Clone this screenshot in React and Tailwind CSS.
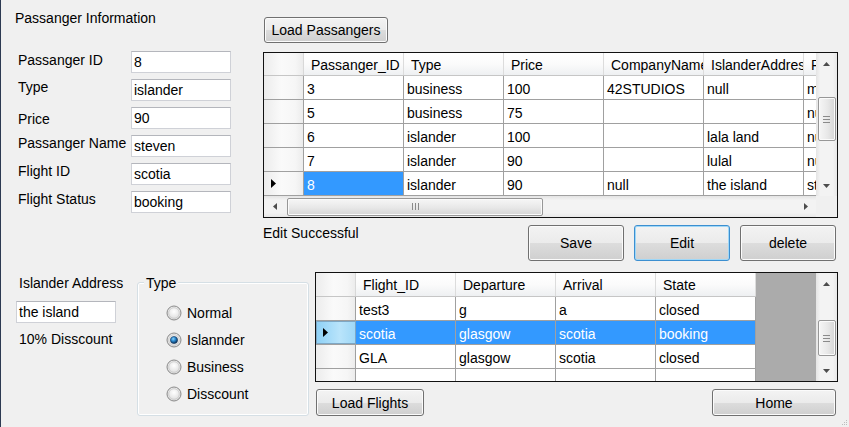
import React from 'react';

const Tri = ({ dir, color = '#4d4d4d' }) => {
  if (dir === 'up') return <svg width="7" height="4"><polygon points="0,4 3.5,0 7,4" fill={color} /></svg>;
  if (dir === 'down') return <svg width="7" height="4"><polygon points="0,0 3.5,4 7,0" fill={color} /></svg>;
  if (dir === 'left') return <svg width="4" height="7"><polygon points="4,0 0,3.5 4,7" fill={color} /></svg>;
  return <svg width="4" height="7"><polygon points="0,0 4,3.5 0,7" fill={color} /></svg>;
};

const RowArrow = () => (
  <svg width="5" height="9"><polygon points="0,0 5,4.5 0,9" fill="#000" /></svg>
);

const VScroll = ({ thumb }) => (
  <div className="flex w-[21px] shrink-0 flex-col bg-[linear-gradient(to_right,#e4e4e4,#f3f3f3_20%,#f3f3f3_80%,#e8e8e8)]">
    <div className="flex h-[21px] items-center justify-center"><Tri dir="up" /></div>
    <div className="flex-1">
      <div className={`mx-auto flex w-[18px] items-center justify-center rounded-[2px] border border-[#979797] bg-[linear-gradient(to_right,#f6f6f6,#e9e9e9_50%,#d6d6d6)] shadow-[inset_0_0_0_1px_#fbfbfb] ${thumb}`}>
        <div className="flex flex-col gap-[2px]">
          <div className="h-px w-[7px] bg-[#8a8a8a]" />
          <div className="h-px w-[7px] bg-[#8a8a8a]" />
          <div className="h-px w-[7px] bg-[#8a8a8a]" />
        </div>
      </div>
    </div>
    <div className="flex h-[21px] items-center justify-center"><Tri dir="down" /></div>
  </div>
);

const HScroll = () => (
  <div className="flex h-full flex-1 items-center bg-[linear-gradient(to_bottom,#e4e4e4,#f3f3f3_20%,#f3f3f3_80%,#e8e8e8)]">
    <div className="flex h-full w-[21px] items-center justify-center"><Tri dir="left" /></div>
    <div className="ml-[2px] flex h-[18px] w-[256px] items-center justify-center rounded-[2px] border border-[#979797] bg-[linear-gradient(to_bottom,#f6f6f6,#e9e9e9_50%,#d6d6d6)] shadow-[inset_0_0_0_1px_#fbfbfb]">
      <div className="flex gap-[2px]">
        <div className="h-[7px] w-px bg-[#8a8a8a]" />
        <div className="h-[7px] w-px bg-[#8a8a8a]" />
        <div className="h-[7px] w-px bg-[#8a8a8a]" />
      </div>
    </div>
    <div className="flex-1" />
    <div className="flex h-full w-[21px] items-center justify-center"><Tri dir="right" /></div>
  </div>
);

const rowHead = 'bg-[linear-gradient(to_right,#ececec,#fafafa_45%,#f6f6f6_80%,#ececec)]';
const colHead = 'bg-[linear-gradient(to_bottom,#ffffff,#fbfbfb_50%,#eef0f2)]';

const Btn = ({ children, className, focused }) => (
  <div
    className={`flex shrink-0 items-center justify-center rounded-[3px] border bg-[linear-gradient(to_bottom,#f3f3f3_0%,#ebebeb_50%,#dddddd_50%,#cfcfcf_100%)] ${
      focused
        ? 'border-[#3c8fd0] shadow-[inset_0_0_0_1px_#9fd7f7]'
        : 'border-[#707070] shadow-[inset_0_0_0_1px_#fbfbfb]'
    } ${className}`}
  >
    {children}
  </div>
);

const TextBox = ({ value, className }) => (
  <div className={`flex h-[22px] items-center border border-[#cfd1d7] border-t-[#b4b6bc] bg-white pl-[2px] whitespace-nowrap ${className}`}>
    {value}
  </div>
);

const Radio = ({ checked }) => (
  <svg width="16" height="16" viewBox="0 0 16 16">
    <defs>
      <radialGradient id="rb" cx="50%" cy="40%" r="60%">
        <stop offset="0%" stopColor="#ffffff" />
        <stop offset="100%" stopColor="#d9d9d9" />
      </radialGradient>
      <radialGradient id="rdot" cx="40%" cy="35%" r="65%">
        <stop offset="0%" stopColor="#8fd4fa" />
        <stop offset="45%" stopColor="#2a8ad0" />
        <stop offset="100%" stopColor="#0b2f57" />
      </radialGradient>
    </defs>
    <circle cx="8" cy="8" r="7" fill="url(#rb)" stroke="#8b8b8b" />
    <circle cx="8" cy="8" r="5.3" fill="none" stroke="#c9c9c9" strokeWidth="0.8" />
    {checked && <circle cx="8" cy="8" r="3.6" fill="url(#rdot)" stroke="#14365c" strokeWidth="0.6" />}
  </svg>
);

const passengerCols = ['Passanger_ID', 'Type', 'Price', 'CompanyName', 'IslanderAddress', 'PassangerName'];
const passengers = [
  ['3', 'business', '100', '42STUDIOS', 'null', 'mark'],
  ['5', 'business', '75', '', '', 'null'],
  ['6', 'islander', '100', '', 'lala land', 'null'],
  ['7', 'islander', '90', '', 'lulal', 'null'],
  ['8', 'islander', '90', 'null', 'the island', 'steven'],
];

const flightCols = ['Flight_ID', 'Departure', 'Arrival', 'State'];
const flights = [
  ['test3', 'g', 'a', 'closed'],
  ['scotia', 'glasgow', 'scotia', 'booking'],
  ['GLA', 'glasgow', 'scotia', 'closed'],
];

const fields = [
  ['Passanger ID', '8', 'pt-[1px]'],
  ['Type', 'islander', 'pt-0'],
  ['Price', '90', 'pt-[4px]'],
  ['Passanger Name', 'steven', 'pt-0'],
  ['Flight ID', 'scotia', 'pt-0'],
  ['Flight Status', 'booking', 'pt-0'],
];

const PassengerGrid = () => (
  <div className="flex h-[166px] w-[575px] flex-col border border-[#111] bg-white">
    <div className="flex h-[143px]">
      <div className="w-[552px] overflow-hidden">
        <div className="flex h-[23px] w-max border-b border-[#c6c6c6]">
          <div className={`h-full w-[40px] shrink-0 border-r border-[#d8d8d8] ${rowHead}`} />
          {passengerCols.map((c) => (
            <div key={c} className={`flex h-full w-[100px] shrink-0 items-center overflow-hidden whitespace-nowrap border-r border-[#dcdcdc] pl-[7px] pt-[1px] ${colHead}`}>
              {c}
            </div>
          ))}
        </div>
        {passengers.map((r, i) => (
          <div key={i} className="flex h-[24px] w-max border-b border-[#a0a0a0]">
            <div className={`flex h-full w-[40px] shrink-0 items-center border-r border-[#a0a0a0] pl-[7px] ${rowHead}`}>
              {i === 4 && <RowArrow />}
            </div>
            {r.map((v, j) => (
              <div
                key={j}
                className={`flex h-full w-[100px] shrink-0 items-center overflow-hidden whitespace-nowrap border-r border-[#a0a0a0] pl-[3px] pt-[2px] ${
                  i === 4 && j === 0 ? 'bg-[#3399ff] text-white' : ''
                }`}
              >
                {v}
              </div>
            ))}
          </div>
        ))}
      </div>
      <VScroll thumb="mt-[23px] h-[44px]" />
    </div>
    <div className="flex h-[21px]">
      <HScroll />
      <div className="h-full w-[21px] bg-[#f0f0f0]" />
    </div>
  </div>
);

const FlightGrid = () => (
  <div className="flex h-[110px] w-[523px] border border-[#111] bg-[#ababab]">
    <div className="w-[500px] overflow-hidden">
      <div className="flex h-[24px] w-max border-b border-[#c6c6c6]">
        <div className={`h-full w-[40px] shrink-0 border-r border-[#d8d8d8] ${rowHead}`} />
        {flightCols.map((c) => (
          <div key={c} className={`flex h-full w-[100px] shrink-0 items-center overflow-hidden whitespace-nowrap border-r border-[#dcdcdc] pl-[7px] pt-[1px] ${colHead}`}>
            {c}
          </div>
        ))}
      </div>
      {[...flights, ['', '', '', '']].map((r, i) => (
        <div key={i} className="flex h-[24px] w-max border-b border-[#a0a0a0]">
          <div
            className={`flex h-full w-[40px] shrink-0 items-center pl-[6px] ${
              i === 1
                ? 'border border-[#7ea7c4] bg-[linear-gradient(to_right,#8fd1f6,#b9e4fb_60%,#9fd8f7)]'
                : `border-r border-[#a0a0a0] ${rowHead}`
            }`}
          >
            {i === 1 && <RowArrow />}
          </div>
          {r.map((v, j) => (
            <div
              key={j}
              className={`flex h-full w-[100px] shrink-0 items-center overflow-hidden whitespace-nowrap border-r border-[#a0a0a0] pl-[3px] pt-[2px] ${
                i === 1 ? 'bg-[#3399ff] text-white' : 'bg-white'
              }`}
            >
              {v}
            </div>
          ))}
        </div>
      ))}
    </div>
    <div className="flex-1 bg-[#ababab]" />
    <VScroll thumb="mt-[26px] h-[36px]" />
  </div>
);

const App = () => {
  return (
    <div className="relative h-[427px] w-[849px] overflow-hidden border-l border-[#2d3a52] bg-[#f0f0f0] font-['Liberation_Sans',Arial,sans-serif] text-[14px] leading-[16px] text-black">
      <div className="flex h-[265px]">
        <div className="w-[262px] shrink-0 pl-[14px] pt-[10px]">
          <div>Passanger Information</div>
          <div className="mt-[25px] flex flex-col gap-[6px]">
            {fields.map(([label, value, pad]) => (
              <div key={label} className="flex h-[22px]">
                <div className={`ml-[3px] w-[113px] shrink-0 whitespace-nowrap ${pad}`}>{label}</div>
                <TextBox value={value} className="w-[100px]" />
              </div>
            ))}
          </div>
        </div>

        <div className="pt-[17px]">
          <Btn className="ml-[1px] h-[26px] w-[124px]">Load Passangers</Btn>
          <div className="mt-[9px]">
            <PassengerGrid />
          </div>
          <div className="mt-[7px] flex w-[575px] pr-[2px]">
            <div className="flex-1 pt-0">Edit Successful</div>
            <div className="flex gap-[10px]">
              <Btn className="h-[36px] w-[96px]">Save</Btn>
              <Btn className="h-[36px] w-[96px]" focused>Edit</Btn>
              <Btn className="h-[36px] w-[96px]">delete</Btn>
            </div>
          </div>
        </div>
      </div>

      <div className="flex pl-[15px]">
        <div className="w-[121px] shrink-0 pt-[10px]">
          <div className="ml-[3px] whitespace-nowrap">Islander Address</div>
          <TextBox value="the island" className="mt-[10px] w-[100px]" />
          <div className="ml-[3px] mt-[8px] whitespace-nowrap">10% Disscount</div>
        </div>

        <div className="relative mt-[17px] h-[134px] w-[172px] shrink-0 rounded-[3px] border border-[#d5dfe5] shadow-[inset_0_0_0_1px_#ffffff]">
          <div className="absolute left-[6px] top-[-8px] bg-[#f0f0f0] px-[2px]">Type</div>
          <div className="flex flex-col pl-[28px] pt-[16px]">
            {[['Normal', false], ['Islannder', true], ['Business', false], ['Disscount', false]].map(([l, c]) => (
              <div key={l} className="flex h-[27px] items-center gap-[5px]">
                <Radio checked={c} />
                <span>{l}</span>
              </div>
            ))}
          </div>
        </div>

        <div className="ml-[6px] mt-[7px]">
          <FlightGrid />
          <div className="mt-[7px] flex w-[523px] justify-between pr-[2px]">
            <Btn className="ml-[1px] h-[27px] w-[108px]">Load Flights</Btn>
            <Btn className="h-[27px] w-[124px]">Home</Btn>
          </div>
        </div>
      </div>

      <svg className="absolute bottom-[1px] right-[1px]" width="6" height="6">
        <rect x="4" y="0" width="1" height="1" fill="#bdbdbd" />
        <rect x="2" y="2" width="1" height="1" fill="#bdbdbd" />
        <rect x="4" y="2" width="1" height="1" fill="#bdbdbd" />
        <rect x="0" y="4" width="1" height="1" fill="#bdbdbd" />
        <rect x="2" y="4" width="1" height="1" fill="#bdbdbd" />
        <rect x="4" y="4" width="1" height="1" fill="#bdbdbd" />
      </svg>
    </div>
  );
};

export default App;
